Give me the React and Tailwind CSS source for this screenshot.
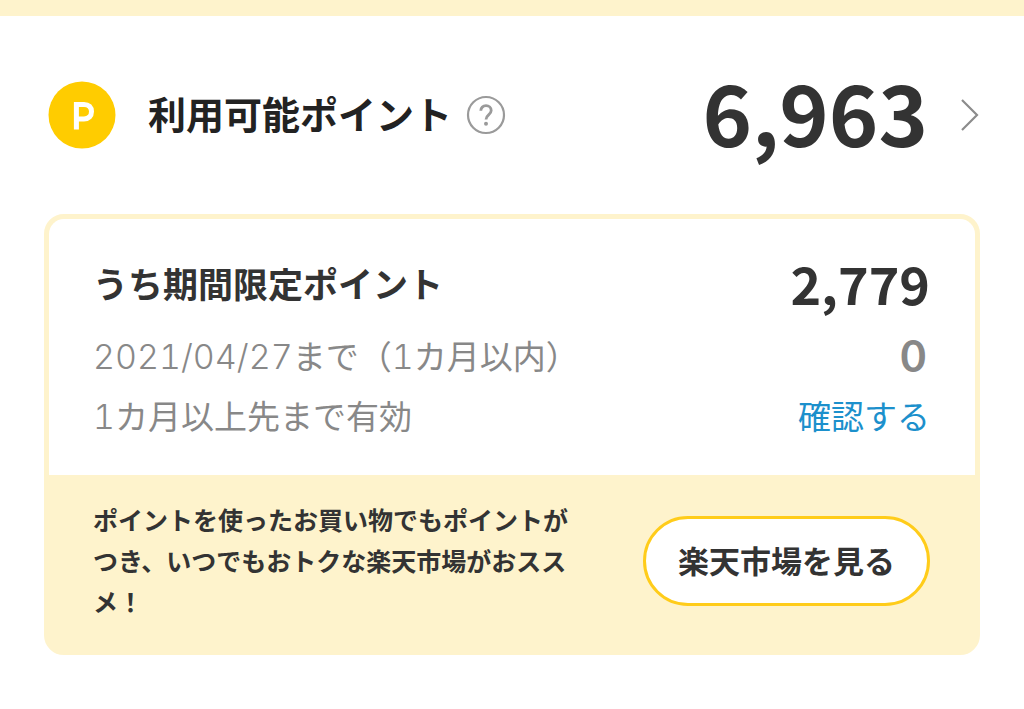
import { useState } from 'react';

const summary = { total: '6,963', limited: '2,779', expiring: '0' };

const Num = ({ children }) => <span className="font-['Inter'] text-[34px] leading-none font-light tabular-nums">{children}</span>;

function PointIcon() {
    return (
        <svg viewBox="0 0 68 68" className="size-[68px] shrink-0" aria-hidden="true">
            <circle cx="34" cy="34" r="33.5" fill="#ffcc00" />
            <path d="M28.4 48.6V23.4h7.6c4.8 0 7.5 2.7 7.5 7.2s-2.7 7.3-7.5 7.3h-7.6" fill="none" stroke="#fff" strokeWidth="5" />
        </svg>
    );
}

function HelpButton() {
    const [open, setOpen] = useState(false);

    return (
        <button type="button" aria-label="ヘルプ" aria-expanded={open} onClick={() => setOpen(!open)} className="ml-3.5 shrink-0 cursor-pointer">
            <svg viewBox="0 0 40 40" className="size-10" fill="none" stroke="#9a9a9a">
                <circle cx="20" cy="20" r="18" strokeWidth="2.2" />
                <path d="M14.8 15.8c0-3 2.2-5.1 5.2-5.1s5.2 2 5.2 4.8c0 4.5-5.2 4.3-5.2 8.9" strokeWidth="2.8" />
                <circle cx="20" cy="28.8" r="2" fill="#9a9a9a" stroke="none" />
            </svg>
        </button>
    );
}

export default function App() {
    return (
        <main className="border-t-[16px] border-[#fef3cc] bg-white px-11 pb-13 font-['Noto_Sans_CJK_JP',sans-serif] text-[#333]">
            <header className="flex items-center pt-12">
                <div className="flex flex-1 items-center pl-1">
                    <PointIcon />
                    <h1 className="ml-8 pb-1 text-[38px] leading-[60px] font-bold text-[#222]">利用可能ポイント</h1>
                    <HelpButton />
                </div>
                <a href="#history" className="flex items-center gap-8">
                    <span className="pb-2 text-[84px] leading-[94px] font-bold">{summary.total}</span>
                    <svg viewBox="0 0 20 34" className="h-[34px] w-5" fill="none" stroke="#8c8c8c" strokeWidth="2.2">
                        <path d="M2 2l15 15L2 32" />
                    </svg>
                </a>
            </header>

            <section className="mt-12 rounded-[20px] border-[5px] border-[#fef3cc] bg-[#fef3cc]">
                <div className="rounded-t-[15px] bg-white pt-8 pr-[45px] pb-[30px] pl-11 text-[33px] leading-[60px] text-[#888]">
                    <div className="mb-2.5 flex items-center justify-between text-[#333]">
                        <h2 className="text-[35px] leading-[64px] font-bold">うち期間限定ポイント</h2>
                        <span className="text-[52px] leading-[64px] font-bold">{summary.limited}</span>
                    </div>
                    <div className="flex items-center justify-between">
                        <p><Num>2021/04/27</Num>まで（<Num>1</Num>カ月以内）</p>
                        <span className="pr-1 font-['Lato'] text-[44px] font-bold">{summary.expiring}</span>
                    </div>
                    <div className="flex items-center justify-between">
                        <p><Num>1</Num>カ月以上先まで有効</p>
                        <a href="#limited" className="text-[#1c90cc]">確認する</a>
                    </div>
                </div>

                <div className="flex items-center gap-14 pt-6 pr-[45px] pb-7 pl-11">
                    <p className="flex-1 text-[25px] leading-[41px] font-bold">
                        ポイントを使ったお買い物でもポイントがつき、いつでもおトクな楽天市場がおススメ！
                    </p>
                    <button type="button" className="h-[90px] shrink-0 cursor-pointer rounded-full border-3 border-[#ffcc1a] bg-white px-8 text-[31px] font-bold">
                        楽天市場を見る
                    </button>
                </div>
            </section>
        </main>
    );
}
